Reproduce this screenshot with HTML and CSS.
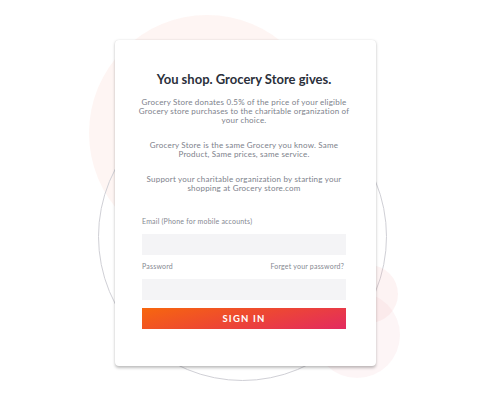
FILE: index.html
```html
<!DOCTYPE html>
<html>
<head>
<meta charset="utf-8">
<link rel="stylesheet" href="styles.css">
</head>
<body>
<div class="stage">
  <div class="blob blob-big"></div>
  <div class="ring"></div>
  <div class="blob blob-s1"></div>
  <div class="blob blob-s2"></div>
  <div class="card">
    <h1 class="title">You shop. Grocery Store gives.</h1>
    <p class="text">Grocery Store donates 0.5% of the price of your eligible Grocery store purchases to the charitable organization of your choice.</p>
    <p class="text text-2">Grocery Store is the same Grocery you know. Same Product, Same prices, same service.</p>
    <p class="text text-3">Support your charitable organization by starting your shopping at Grocery store.com</p>
    <form class="form">
      <label class="label label-email">Email (Phone for mobile accounts)</label>
      <div class="input"></div>
      <div class="row">
        <span class="label">Password</span>
        <span class="label">Forget your password?</span>
      </div>
      <div class="input"></div>
      <div class="btn">SIGN IN</div>
    </form>
  </div>
</div>
</body>
</html>
```
FILE: styles.css
```css
html, body {
  margin: 0;
  padding: 0;
  background: #ffffff;
}
.stage {
  position: relative;
  width: 488px;
  height: 400px;
  overflow: hidden;
  font-family: "Lato", "Liberation Sans", sans-serif;
}
.blob {
  position: absolute;
  border-radius: 50%;
  background: rgba(244, 170, 160, 0.12);
}
.blob-big {
  left: 89px;
  top: 15px;
  width: 236px;
  height: 236px;
}
.ring {
  position: absolute;
  left: 98px;
  top: 92px;
  width: 287px;
  height: 287px;
  border-radius: 50%;
  border: 1.5px solid #d0d0d6;
}
.blob-s1 {
  left: 340px;
  top: 265px;
  width: 58px;
  height: 58px;
  background: rgba(240, 160, 165, 0.13);
}
.blob-s2 {
  left: 314px;
  top: 292px;
  width: 86px;
  height: 86px;
  background: rgba(240, 160, 165, 0.1);
}
.card {
  position: relative;
  margin: 40px 0 0 115px;
  width: 261px;
  height: 326px;
  box-sizing: border-box;
  padding: 30px 30px 0 27px;
  background: #ffffff;
  border-radius: 4px;
  box-shadow: 0 1.5px 3px rgba(0, 0, 0, 0.25), 0 0 1px rgba(0, 0, 0, 0.08);
  text-align: center;
}
.title {
  margin: 0;
  font-size: 13px;
  line-height: 18px;
  font-weight: 700;
  color: #2b303b;
}
.text {
  margin: 10px -4px 0;
  font-size: 8px;
  line-height: 9px;
  letter-spacing: 0.2px;
  color: #7d818b;
}
.text-2, .text-3 {
  margin-top: 16px;
}
.text-2 {
  padding: 0 8px;
}
.form {
  margin: 24px 0 0;
  text-align: left;
}
.label {
  display: block;
  font-size: 7px;
  line-height: 8px;
  letter-spacing: 0.2px;
  color: #858891;
}
.input {
  margin-top: 9px;
  height: 21px;
  background: #f4f4f6;
}
.row {
  display: flex;
  justify-content: space-between;
  margin-top: 7px;
  padding-right: 2px;
}
.btn {
  margin-top: 8px;
  height: 21px;
  line-height: 22px;
  text-align: center;
  color: #ffffff;
  font-size: 9.5px;
  font-weight: 700;
  letter-spacing: 1.2px;
  background: linear-gradient(165deg, #f7670e 0%, #ee4a2f 45%, #e32a60 100%);
}
```
